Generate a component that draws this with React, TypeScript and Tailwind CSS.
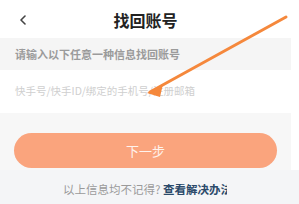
import React from "react";

export default function App() {
  return (
    <div
      className="relative w-[299px] h-[204px] overflow-hidden bg-white"
      style={{ fontFamily: '"Noto Sans CJK SC", "Noto Sans", sans-serif' }}
    >
      <div className="w-[291px]">
        <div className="relative flex h-[38px] items-center justify-center bg-white pt-[2px]">
          <svg className="absolute left-[19px] top-[15px]" width="8" height="10" viewBox="0 0 8 10">
            <path d="M6 1 L2 5 L6 9" fill="none" stroke="#444" strokeWidth="1.6" strokeLinecap="round" strokeLinejoin="round" />
          </svg>
          <span className="text-[16px] font-bold text-[#222] leading-none">找回账号</span>
        </div>
        <div className="flex h-[32px] items-center bg-[#f5f5f5] pl-[15px]">
          <span className="text-[11px] font-semibold text-[#9b9b9b] leading-none">请输入以下任意一种信息找回账号</span>
        </div>
        <div className="flex h-[43px] items-center bg-white pl-[15px]">
          <span className="text-[10.5px] text-[#cfcfcf] leading-none">快手号/快手ID/绑定的手机号/注册邮箱</span>
        </div>
        <div className="flex h-[57px] items-start bg-[#f7f7f7] px-[14px] pt-[20px]">
          <div className="flex h-[35px] w-[265px] items-center justify-center rounded-full bg-[#faa47d]">
            <span className="text-[13px] text-[#fff3ec] leading-none">下一步</span>
          </div>
        </div>
      </div>
      <div className="flex h-[34px] items-center bg-[#f4f5f7] pl-[63px] pt-[5px]">
        <div className="w-[164px] overflow-hidden whitespace-nowrap text-[11.5px] leading-none">
          <span className="text-[#9a9a9a]">以上信息均不记得? </span>
          <span className="font-bold text-[#2b4a6a]">查看解决办法</span>
        </div>
      </div>
      <svg className="pointer-events-none absolute left-0 top-0" width="299" height="204" viewBox="0 0 299 204">
        <line x1="286" y1="17" x2="150" y2="92" stroke="#f5883c" strokeWidth="3" strokeLinecap="round" />
        <path d="M147 93 L163 84 L160 97 Z" fill="#f5883c" />
      </svg>
    </div>
  );
}
